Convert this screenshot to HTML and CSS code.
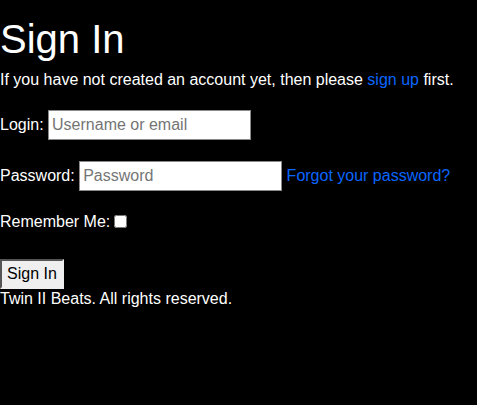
FILE: index.html
```html
<!DOCTYPE html>
<html lang="en">
<head>
<meta charset="utf-8">
<title>Sign In</title>
<link rel="stylesheet" href="styles.css">
</head>
<body>
<main class="page">
  <h1 class="title">Sign In</h1>
  <p class="intro">If you have not created an account yet, then please <a class="link" href="#">sign up</a> first.</p>
  <form class="form">
    <div class="row row-login">
      <label for="login">Login:</label> <input class="field" id="login" type="text" placeholder="Username or email">
    </div>
    <div class="row row-password">
      <label for="password">Password:</label> <input class="field" id="password" type="password" placeholder="Password"> <a class="link" href="#">Forgot your password?</a>
    </div>
    <div class="row row-remember">
      <label for="remember">Remember Me:</label><input class="check" id="remember" type="checkbox">
    </div>
    <div class="row row-submit">
      <button class="btn" type="submit">Sign In</button>
    </div>
  </form>
  <footer class="footer">Twin II Beats. All rights reserved.</footer>
</main>
</body>
</html>
```
FILE: styles.css
```css
html, body {
  margin: 0;
  padding: 0;
  background: #000;
}
body {
  color: #fff;
  font-family: "Liberation Sans", Arial, sans-serif;
  font-size: 16px;
  line-height: 18px;
}
.page {
  padding-top: 16px;
}
.title {
  margin: 0;
  font-size: 40px;
  line-height: 46px;
  font-weight: normal;
}
.intro {
  margin: 9px 0 0;
}
.link {
  color: #0a66ff;
  text-decoration: none;
}
.form {
  margin: 0;
}
.row-login {
  margin-top: 21px;
}
.row-password {
  margin-top: 21px;
}
.row-remember {
  margin-top: 22px;
}
.row-submit {
  margin-top: 28px;
}
.field {
  box-sizing: border-box;
  width: 203px;
  height: 30px;
  margin: 0;
  padding: 5px 3px;
  border: 1px solid #8a8a8a;
  border-radius: 0;
  background: #fff;
  color: #000;
  font-family: "Liberation Sans", Arial, sans-serif;
  font-size: 16px;
  vertical-align: baseline;
}
.field::placeholder {
  color: #757575;
}
.check {
  width: 13px;
  height: 13px;
  margin: 0 0 0 4px;
  vertical-align: -1px;
}
.btn {
  display: block;
  box-sizing: border-box;
  height: 30px;
  margin: 0;
  padding: 4px 5px;
  border-width: 2px;
  border-style: solid;
  border-color: #555 #efefef #efefef #555;
  border-radius: 0;
  background: #efefef;
  color: #000;
  font-family: "Liberation Sans", Arial, sans-serif;
  font-size: 16px;
  line-height: 18px;
}
.footer {
  margin-top: 1px;
}
```
